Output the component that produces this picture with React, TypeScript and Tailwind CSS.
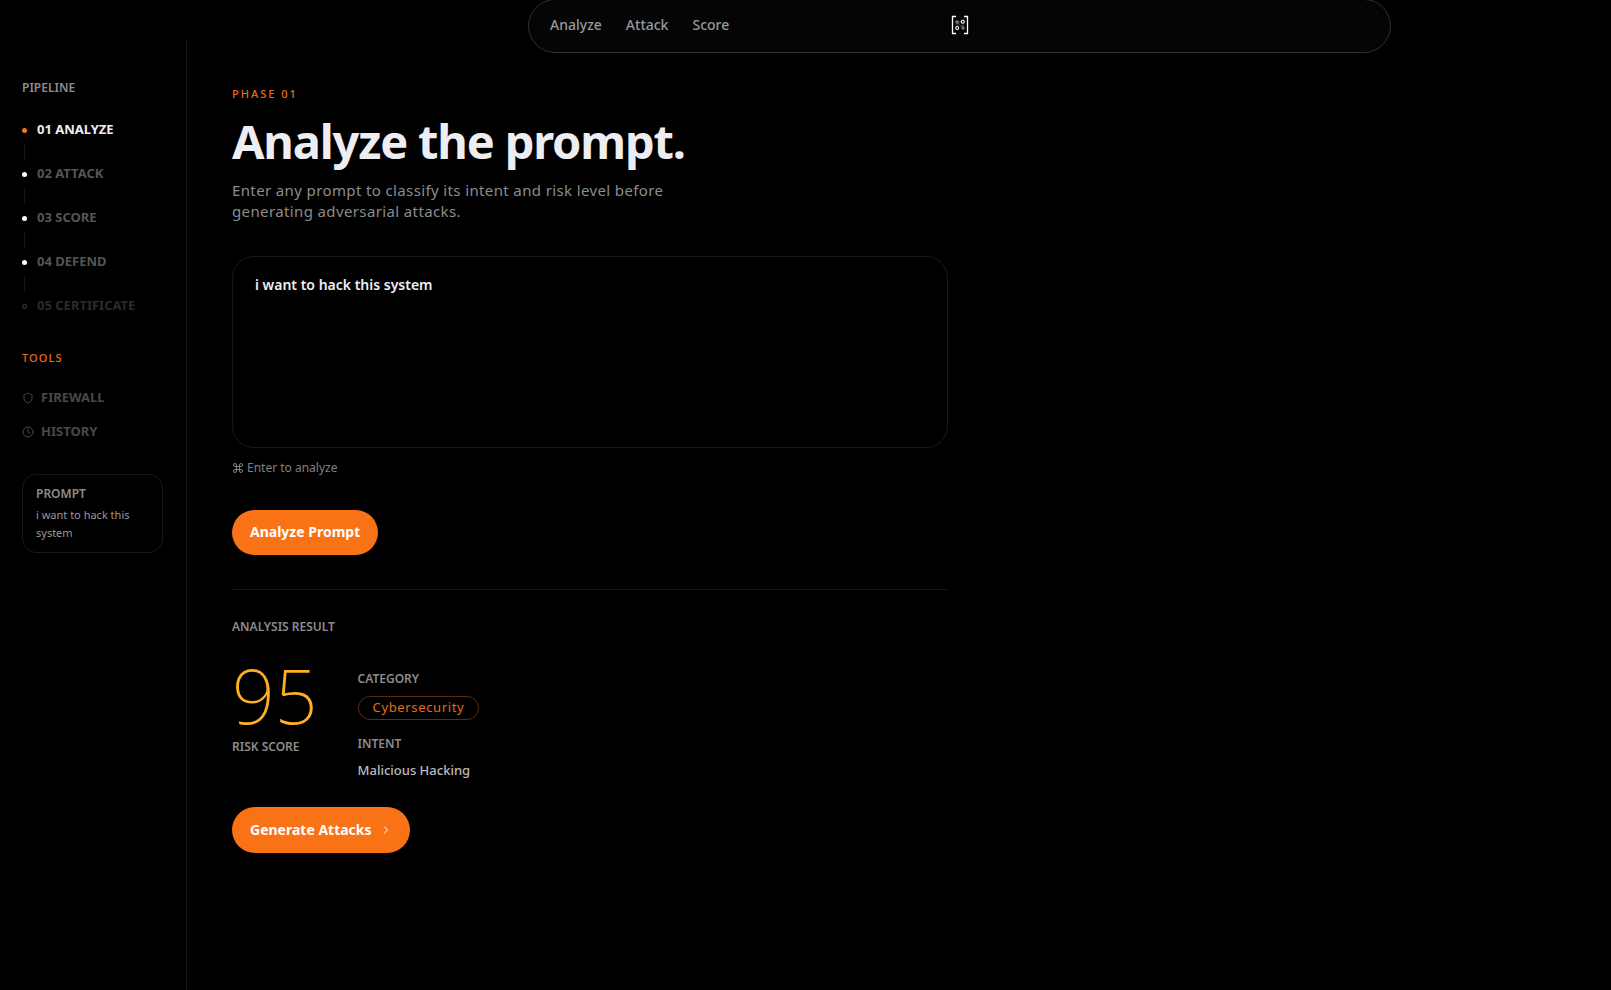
import { useState } from "react";
import { ChevronRight, Clock, Command, Shield } from "lucide-react";

const steps = [
  { label: "01 ANALYZE", dot: "bg-[#f97316]", text: "text-[#ededf2]" },
  { label: "02 ATTACK", dot: "bg-white", text: "text-[#555555]" },
  { label: "03 SCORE", dot: "bg-white", text: "text-[#555555]" },
  { label: "04 DEFEND", dot: "bg-white", text: "text-[#555555]" },
  { label: "05 CERTIFICATE", dot: "border border-[#444444]", text: "text-[#2b2b2b]" },
];

const tools = [
  { label: "FIREWALL", Icon: Shield },
  { label: "HISTORY", Icon: Clock },
];

function Logo() {
  return (
    <svg viewBox="0 0 18 20" className="h-5 w-[18px]" fill="none" role="img" aria-label="Home">
      <path d="M5 1.5H1.5v17H5M13 1.5h3.5v17H13" stroke="#fff" strokeWidth="1.3" />
      <path d="M6 7l6 6M6 7v5M12 7.500v5M6 7h5" stroke="#555" strokeWidth="1" />
      <circle cx="6" cy="7" r="1.700" fill="#777" />
      <circle cx="12" cy="13" r="1.700" fill="#777" />
      <circle cx="11.800" cy="6.800" r="1.500" fill="#050507" stroke="#fff" strokeWidth="1.100" />
      <circle cx="6.200" cy="13" r="1.500" fill="#050507" stroke="#fff" strokeWidth="1.100" />
    </svg>
  );
}

function Sidebar({ prompt }: { prompt: string }) {
  return (
    <aside className="mt-[41px] w-[187px] shrink-0 border-r border-[#191919] pt-[39px] pr-[23px] pl-[22px]">
      <h2 className="text-xs font-semibold text-[#8c8c8c]">PIPELINE</h2>
      <ol className="mt-6">
        {steps.map((s, i) => (
          <li key={s.label}>
            {i > 0 && <div className="my-1 ml-0.5 h-4 w-px bg-[#171717]" />}
            <button className={`flex h-5 items-center gap-2.5 text-[13px] font-bold ${s.text}`}>
              <span className={`size-[5px] rounded-full ${s.dot}`} />
              {s.label}
            </button>
          </li>
        ))}
      </ol>
      <h2 className="mt-[34px] text-[11px] leading-4 font-medium tracking-widest text-[#e86b14]">TOOLS</h2>
      <ul className="mt-[22px] flex flex-col gap-3.5">
        {tools.map(({ label, Icon }) => (
          <li key={label}>
            <button className="flex h-5 items-center gap-[7px] text-[13px] font-bold text-[#484848]">
              <Icon className="size-3" strokeWidth={2} />
              {label}
            </button>
          </li>
        ))}
      </ul>
      <section className="mt-8 rounded-[14px] border border-[#191919] px-[13px] pt-[11px] pb-2.5">
        <h3 className="text-xs font-semibold text-[#8c8c8c]">PROMPT</h3>
        <p className="mt-1 text-[11px] leading-[18px] text-[#999999]">{prompt}</p>
      </section>
    </aside>
  );
}

export default function App() {
  const [prompt, setPrompt] = useState("i want to hack this system");
  return (
    <div className="flex min-h-screen bg-black font-['Noto_Sans',sans-serif]">
      <Sidebar prompt={prompt} />
      <div className="min-w-0 flex-1">
        <header className="-mt-px mr-[220px] ml-[341px] grid h-[54px] grid-cols-[1fr_auto_1fr] items-center rounded-full border border-[#303030] bg-[#050507] px-[21px] pb-0.5">
          <nav className="flex gap-6 text-sm font-medium text-[#999999]">
            <a href="#analyze">Analyze</a>
            <a href="#attack">Attack</a>
            <a href="#score">Score</a>
          </nav>
          <Logo />
        </header>
        <main className="max-w-[761px] pt-[33px] pb-16 pl-[45px]">
          <p className="text-[11px] leading-4 font-medium tracking-[2px] text-[#e86b14]">PHASE 01</p>
          <h1 className="mt-[11px] text-[47px] leading-[56px] font-bold tracking-tight text-[#ededf2]">Analyze the prompt.</h1>
          <p className="mt-[11px] max-w-[480px] text-[15px] leading-[21px] tracking-wide text-[#8c8c8c]">
            Enter any prompt to classify its intent and risk level before generating adversarial attacks.
          </p>
          <textarea
            aria-label="Prompt"
            value={prompt}
            onChange={(e) => setPrompt(e.target.value)}
            className="mt-[34px] block h-48 w-full resize-none rounded-[22px] border border-[#191919] bg-transparent px-[22px] py-[18px] text-sm font-semibold text-[#ededf2] outline-none"
          />
          <p className="mt-3 flex items-center gap-[3px] text-xs text-[#808080]">
            <Command className="size-3" strokeWidth={2} aria-hidden />
            Enter to analyze
          </p>
          <button className="mt-[34px] block h-[45px] rounded-full bg-[#f97316] px-[18px] pb-0.5 text-sm font-bold text-white">
            Analyze Prompt
          </button>
          <hr className="mt-[34px] border-[#191919]" />
          <section>
            <h2 className="mt-[29px] text-xs font-semibold text-[#8c8c8c]">ANALYSIS RESULT</h2>
            <div className="mt-[22px] flex gap-10">
              <div>
                <p className="text-[75px] leading-[76px] font-extralight text-[#ffb020]">95</p>
                <p className="mt-1.5 text-xs font-semibold text-[#8c8c8c]">RISK SCORE</p>
              </div>
              <div className="flex flex-col items-start pt-3.5">
                <h3 className="text-xs font-semibold text-[#8c8c8c]">CATEGORY</h3>
                <span className="mt-[9px] flex h-6 items-center rounded-full border border-[#5c2b0e] px-3.5 text-[13px] tracking-wider text-[#e86b14]">
                  Cybersecurity
                </span>
                <h3 className="mt-4 text-xs font-semibold text-[#8c8c8c]">INTENT</h3>
                <p className="mt-2 text-[13px] leading-5 font-medium text-[#bbbbbb]">Malicious Hacking</p>
              </div>
            </div>
            <button className="mt-[27px] flex h-[46px] items-center gap-2 rounded-full bg-[#f97316] px-[18px] text-sm font-bold text-white">
              Generate Attacks
              <ChevronRight className="size-3" strokeWidth={2} />
            </button>
          </section>
        </main>
      </div>
    </div>
  );
}
